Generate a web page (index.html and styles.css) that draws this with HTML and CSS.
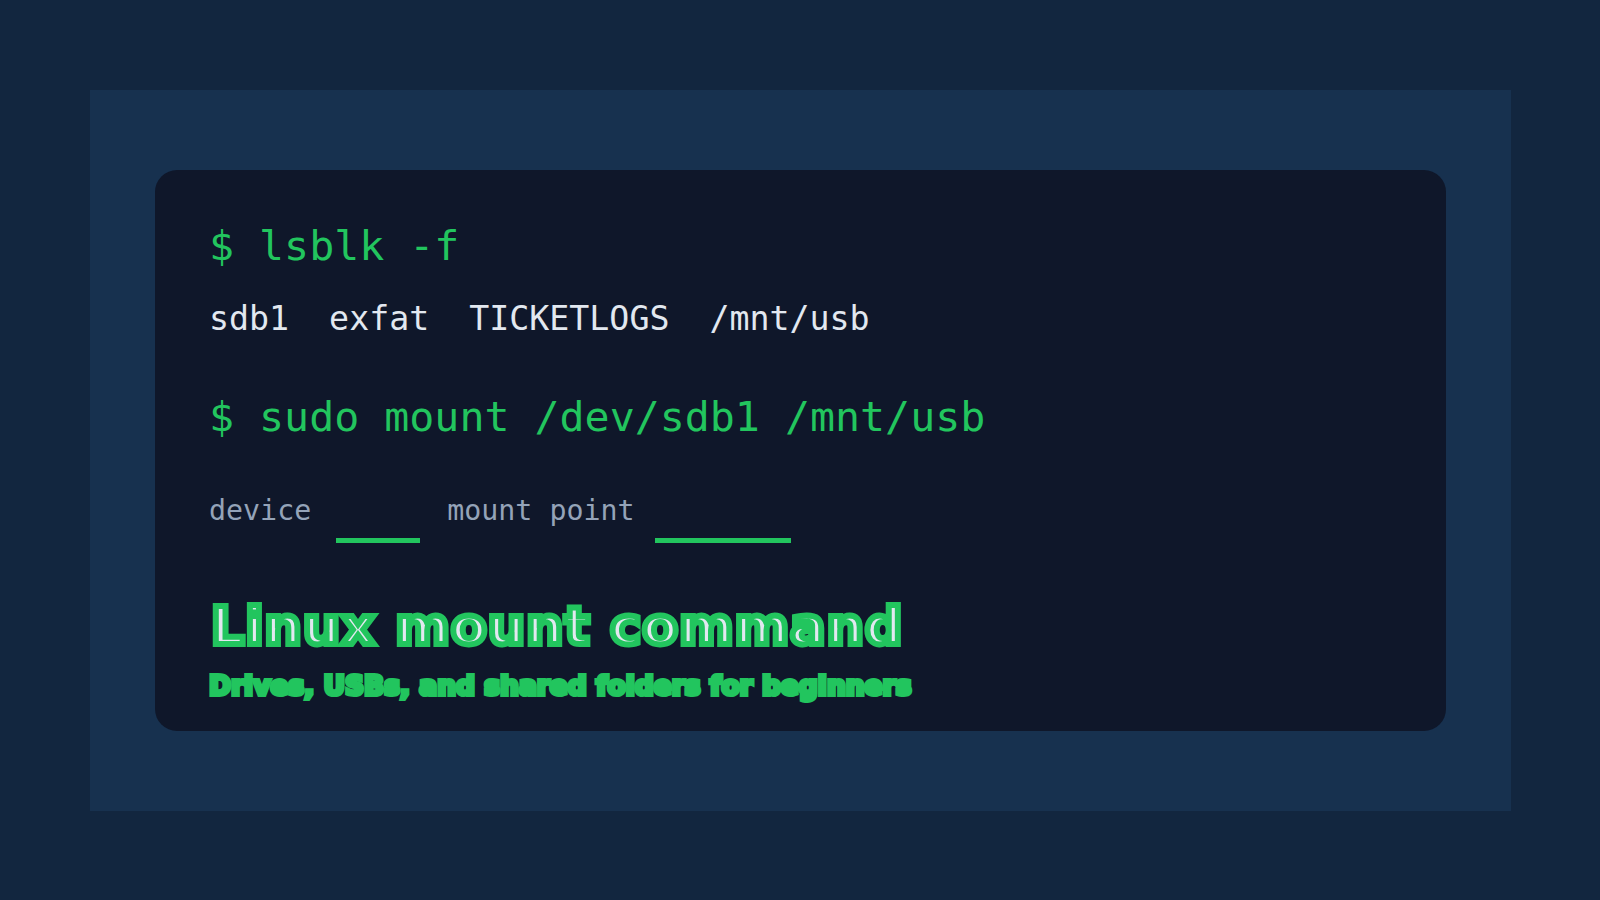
FILE: index.html
```html
<!DOCTYPE html>
<html>
<head>
<meta charset="utf-8">
<link rel="stylesheet" href="styles.css">
</head>
<body>
<div class="panel">
  <div class="card">
    <div class="cmd cmd-first">$ lsblk -f</div>
    <div class="out">sdb1  exfat  TICKETLOGS  /mnt/usb</div>
    <div class="cmd cmd-second">$ sudo mount /dev/sdb1 /mnt/usb</div>
    <div class="labels">
      <span class="label">device</span>
      <span class="rule rule-device"></span>
      <span class="label">mount point</span>
      <span class="rule rule-mp"></span>
    </div>
    <div class="title">Linux mount command</div>
    <div class="subtitle">Drives, USBs, and shared folders for beginners</div>
  </div>
</div>
</body>
</html>
```
FILE: styles.css
```css
html, body {
  margin: 0;
  padding: 0;
}
body {
  width: 1600px;
  height: 900px;
  background: #12263f;
  padding: 90px 0 0 90px;
  box-sizing: border-box;
}
.panel {
  width: 1421px;
  height: 721px;
  background: #17314f;
  padding: 80px 65px;
  box-sizing: border-box;
}
.card {
  width: 1291px;
  height: 561px;
  background: #0f172a;
  border-radius: 22px;
  box-sizing: border-box;
  padding: 51px 0 0 54px;
}
.cmd {
  font-family: "DejaVu Sans Mono", monospace;
  font-size: 41.6px;
  line-height: 50px;
  color: #22c55e;
  white-space: pre;
}
.out {
  font-family: "DejaVu Sans Mono", monospace;
  font-size: 33.25px;
  line-height: 40px;
  color: #e2e8f0;
  white-space: pre;
  margin-top: 28px;
}
.cmd-second {
  margin-top: 53px;
}
.labels {
  display: flex;
  align-items: flex-start;
  margin-top: 52px;
  height: 50px;
}
.label {
  font-family: "DejaVu Sans Mono", monospace;
  font-size: 28.3px;
  line-height: 34px;
  color: #94a3b8;
  white-space: pre;
}
.rule {
  display: block;
  height: 5px;
  background: #22c55e;
  margin-top: 44px;
}
.rule-device {
  width: 84px;
  margin-left: 25px;
  margin-right: 27px;
}
.rule-mp {
  width: 136px;
  margin-left: 20px;
}
.title {
  font-family: "DejaVu Sans", sans-serif;
  font-weight: bold;
  font-size: 52px;
  line-height: 60px;
  letter-spacing: 1.3px;
  color: #e2e8f0;
  -webkit-text-stroke: 6px #22c55e;
  margin-top: 52px;
  padding-left: 2px;
  white-space: pre;
}
.subtitle {
  font-family: "DejaVu Sans", sans-serif;
  font-weight: bold;
  font-size: 26.5px;
  line-height: 32px;
  color: #22c55e;
  -webkit-text-stroke: 4px #22c55e;
  paint-order: stroke fill;
  margin-top: 14px;
  white-space: pre;
}
```
